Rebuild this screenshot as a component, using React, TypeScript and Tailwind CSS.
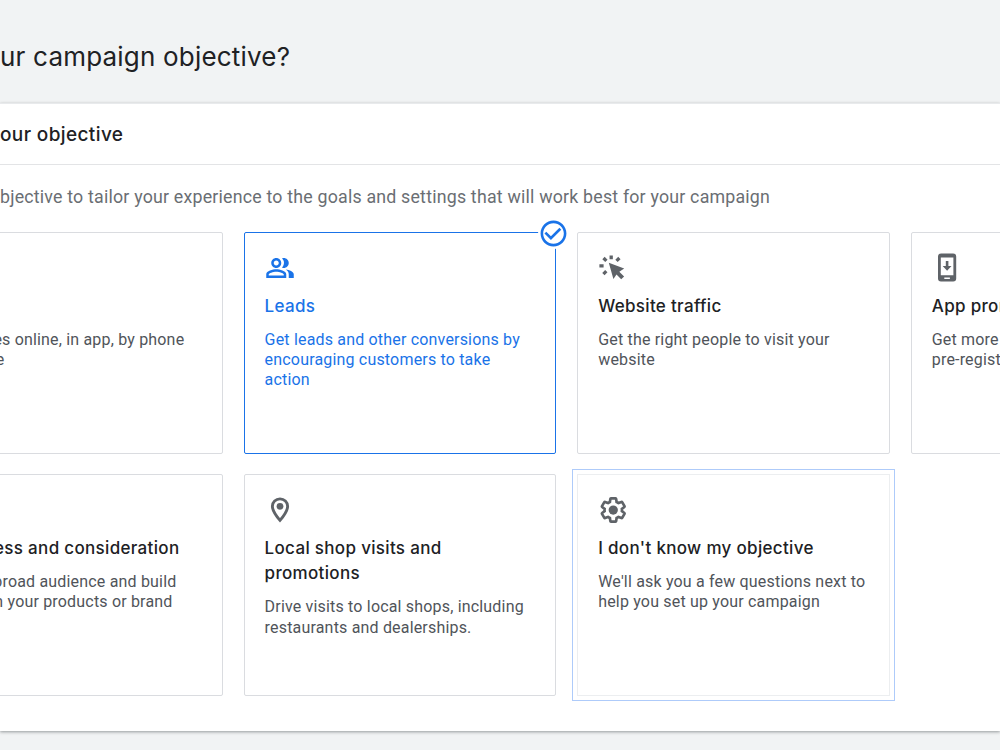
import React from 'react';
import { clsx } from 'clsx';
import { MdOutlinePeopleAlt, MdCheckCircleOutline } from 'react-icons/md';

interface Objective {
  id: string;
  icon?: React.ReactNode;
  title: string[];
  description: string[];
  selected?: boolean;
  focused?: boolean;
}

const ClickIcon = () => (
  <svg viewBox="0 0 30 30" className="size-[30px]" fill="currentColor">
    <path d="M10.8 9.8 L26.2 15.5 L21.3 18.7 L26.1 23.5 L23.2 26.3 L18.5 21.6 L15.4 26.1 Z" />
    <path
      d="M13.2 2.4v3.8M5.5 5l2.9 2.9M21.4 5l-2.9 2.9M1.4 12.8h4.2M5.4 21.1l2.9-2.9"
      fill="none"
      stroke="currentColor"
      strokeWidth="3.3"
    />
  </svg>
);

const PhoneIcon = () => (
  <svg viewBox="0 0 30 30" className="size-[30px]" fill="currentColor">
    <path
      fillRule="evenodd"
      d="M9 .6h12.2a3 3 0 0 1 3 3v22a3 3 0 0 1-3 3H9a3 3 0 0 1-3-3V3.6a3 3 0 0 1 3-3ZM8.8 4.6v17.6h12.6V4.6ZM12.3 24.6v1.3h5.6V24.6Z"
    />
    <path d="M13.8 8h2.6v5h3.1L15.1 17.7l-4.4-4.7h3.1Z" />
  </svg>
);

const PlaceIcon = () => (
  <svg viewBox="0 0 24 24" className="size-[30px]" fill="currentColor">
    <path
      d="M12 3.1c-3.4 0-6.1 2.6-6.1 5.9 0 4.2 6.1 11.3 6.1 11.3S18.1 13.2 18.1 9c0-3.3-2.7-5.9-6.1-5.9Z"
      fill="none"
      stroke="currentColor"
      strokeWidth="2.3"
    />
    <circle cx="12" cy="9" r="2.7" />
  </svg>
);

const GearIcon = () => (
  <svg viewBox="0 0 24 24" className="size-[30px]" fill="currentColor">
    <circle cx="12.2" cy="12" r="3.7" />
    <path
      transform="translate(1.04 0.84) scale(0.93)"
      fill="none"
      stroke="currentColor"
      strokeWidth="2.3"
      d="M19.43 12.98c.04-.32.07-.64.07-.98 0-.34-.03-.66-.07-.98l2.11-1.65c.19-.15.24-.42.12-.64l-2-3.46a.5.5 0 0 0-.61-.22l-2.49 1c-.52-.4-1.08-.73-1.69-.98l-.38-2.65A.488.488 0 0 0 14 2h-4c-.25 0-.46.18-.49.42l-.38 2.65c-.61.25-1.17.59-1.69.98l-2.49-1a.566.566 0 0 0-.18-.03c-.17 0-.34.09-.43.25l-2 3.46c-.13.22-.07.49.12.64l2.11 1.65c-.04.32-.07.65-.07.98 0 .33.03.66.07.98l-2.11 1.65c-.19.15-.24.42-.12.64l2 3.46a.5.5 0 0 0 .61.22l2.49-1c.52.4 1.08.73 1.69.98l.38 2.65c.03.24.24.42.49.42h4c.25 0 .46-.18.49-.42l.38-2.65c.61-.25 1.17-.59 1.69-.98l2.49 1c.06.02.12.03.18.03.17 0 .34-.09.43-.25l2-3.46c.12-.22.07-.49-.12-.64l-2.11-1.65z"
    />
  </svg>
);

const OBJECTIVES: Objective[] = [
  {
    id: 'sales',
    title: [],
    description: ['Drive sales online, in app, by phone', 'or in store']
  },
  {
    id: 'leads',
    icon: <MdOutlinePeopleAlt className="size-[30px]" />,
    title: ['Leads'],
    description: ['Get leads and other conversions by', 'encouraging customers to take', 'action'],
    selected: true
  },
  {
    id: 'traffic',
    icon: <ClickIcon />,
    title: ['Website traffic'],
    description: ['Get the right people to visit your', 'website']
  },
  {
    id: 'app',
    icon: <PhoneIcon />,
    title: ['App promotion'],
    description: ['Get more installs, engagement and', 'pre-registration for your app']
  },
  {
    id: 'awareness',
    title: ['Awareness and consideration'],
    description: ['Reach a broad audience and build', 'interest in your products or brand']
  },
  {
    id: 'local',
    icon: <PlaceIcon />,
    title: ['Local shop visits and', 'promotions'],
    description: ['Drive visits to local shops, including', 'restaurants and dealerships.']
  },
  {
    id: 'unknown',
    icon: <GearIcon />,
    title: ["I don't know my objective"],
    description: ["We'll ask you a few questions next to", 'help you set up your campaign'],
    focused: true
  }
];

const ObjectiveCard = ({ objective }: { objective: Objective }) => {
  const { icon, title, description, selected, focused } = objective;

  return (
    <div
      className={clsx(
        'relative h-[222px] border pl-[20px] pt-[20px]',
        selected ? 'border-[#1a73e8] text-[#1a73e8]' : 'text-[#5f6368]',
        !selected && !focused && 'border-[#dadce0]',
        focused
          ? 'border-[#eceef0] outline outline-[#aecbfa] outline-offset-[4px]'
          : 'rounded-[2px]'
      )}
    >
      {selected && (
        <span className="absolute -right-[14px] -top-[15px] rounded-full bg-white">
          <MdCheckCircleOutline className="size-[31px]" />
        </span>
      )}
      <div className="h-[30px]">{icon}</div>
      <h3
        className={clsx(
          'mt-[10.6px] min-h-[25.4px] font-[family-name:Inter,sans-serif] text-[17px] font-medium leading-[25.4px] tracking-[0.32px] whitespace-nowrap',
          !selected && 'text-[#202124]'
        )}
      >
        {title.map((line) => <span key={line} className="block">{line}</span>)}
      </h3>
      <p
        className={clsx(
          'mt-[10.8px] text-[16px] leading-[20.3px] tracking-[0.18px] whitespace-nowrap',
          !selected && 'text-[#50545a]'
        )}
      >
        {description.map((line) => <span key={line} className="block">{line}</span>)}
      </p>
    </div>
  );
};

const App = () => (
  <div className="h-[750px] w-[1000px] overflow-hidden bg-[#f1f3f4] font-[family-name:Roboto,sans-serif]">
    <h1 className="flex h-[103px] items-center pt-[10px] font-[family-name:Inter,sans-serif] text-[26px] tracking-[0.2px] whitespace-nowrap text-[#202124]">
      ur campaign objective?
    </h1>

    <section className="h-[628px] border-t border-[#e8eaec] bg-white shadow-[0_1px_3px_rgba(60,64,67,0.5)]">
      <h2 className="flex h-[61px] items-center border-b border-[#e3e4e6] pt-[3px] font-[family-name:Inter,sans-serif] text-[19px] font-medium tracking-[0.38px] whitespace-nowrap text-[#202124]">
        our objective
      </h2>
      <p className="pt-[20px] text-[17.8px] leading-[24px] tracking-[0.2px] whitespace-nowrap text-[#6a6e73]">
        bjective to tailor your experience to the goals and settings that will work best for your campaign
      </p>
      <div className="-ml-[90px] mt-[23px] grid w-[1313px] grid-cols-[repeat(4,312.6px)] gap-x-[21px] gap-y-[20px]">
        {OBJECTIVES.map((objective) => (
          <ObjectiveCard key={objective.id} objective={objective} />
        ))}
      </div>
    </section>
  </div>
);

export default App;
